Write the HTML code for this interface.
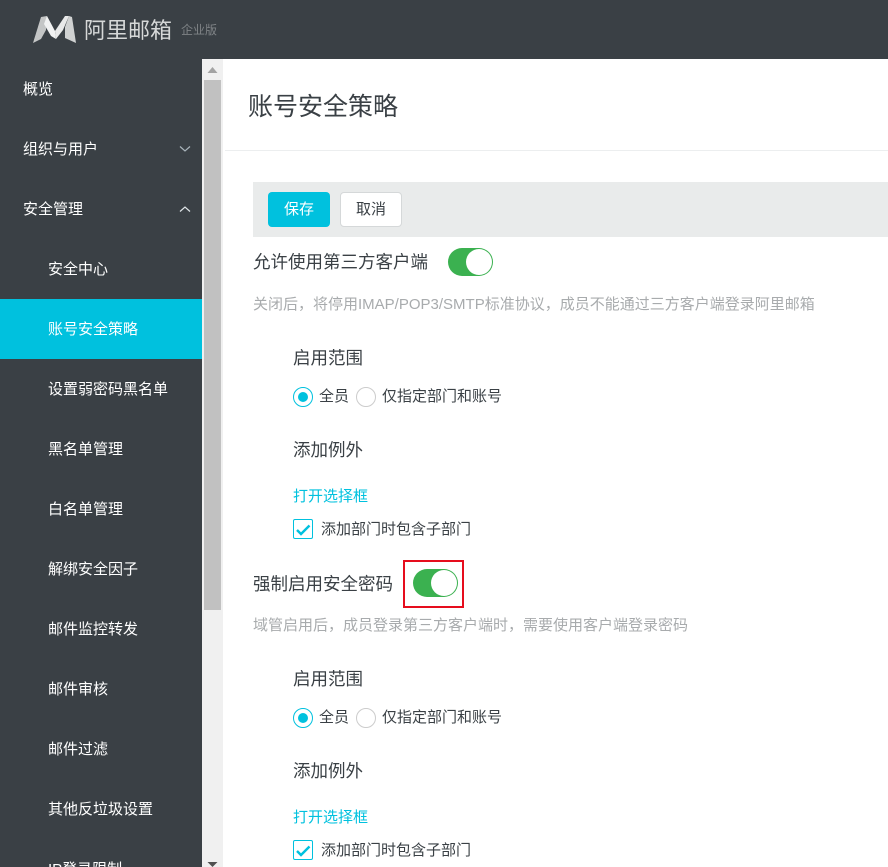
<!DOCTYPE html>
<html lang="zh-CN">
<head>
<meta charset="utf-8">
<title>账号安全策略</title>
<style>
html,body{margin:0;padding:0;width:888px;height:867px;overflow:hidden;background:#fff}
body{font-family:"Liberation Sans","Noto Sans CJK SC",sans-serif;color:#3a4045;position:relative}
.a{position:absolute;white-space:nowrap}
#hd{left:0;top:0;width:888px;height:59px;background:#3a4045}
#sb{left:0;top:59px;width:202px;height:808px;background:#3a4045;overflow:hidden}
.it{position:absolute;left:0;width:202px;height:60px;line-height:61px;color:#fff;font-size:15px;box-sizing:border-box;padding-left:23px}
.sub{padding-left:48px}
.on{background:#00c1de}
#track{left:202px;top:59px;width:21px;height:808px;background:#f0f0f0}
#thumb{left:204px;top:80px;width:17px;height:530px;background:#c1c1c1}
.t16{font-size:17.5px;line-height:24px}
.t14{font-size:15px;line-height:20px}
.t13{font-size:15px;line-height:20px}
.sw{width:45px;height:28px;border-radius:14px;background:#3bb150}
.sw:after{content:"";position:absolute;right:1px;top:1px;width:26px;height:26px;border-radius:50%;background:#fff}
.ra{width:18px;height:18px;border:1px solid #ccc;border-radius:50%;background:#fff}
.ra.c{border-color:#00c1de}
.ra.c:after{content:"";position:absolute;left:4px;top:4px;width:10px;height:10px;border-radius:50%;background:#00c1de}
.cb{width:18px;height:18px;border:1px solid #00c1de;border-radius:2px;background:#fff}
.lnk{color:#00c1de}
.gr{color:#a8abad}
</style>
</head>
<body>
<div class="a" id="hd"></div>
<svg class="a" style="left:32px;top:15px" width="46" height="30" viewBox="0 0 46 30">
<polygon points="1,28 9,2 15,1 14,15 9,24" fill="#c4c6c6"/>
<polygon points="15,1 23,16 24,24 19,21 12,9" fill="#f1f2f2"/>
<polygon points="24,24 23,16 33,1 37,1 31,15" fill="#e8e9e9"/>
<polygon points="37,1 40,2 44,28 33,23 33,12" fill="#d0d2d2"/>
</svg>
<div class="a" style="left:84px;top:14px;font-size:22px;line-height:34px;color:#d6d8d8;font-weight:400">阿里邮箱</div>
<div class="a" style="left:181px;top:21px;font-size:12px;line-height:18px;color:#7f8386">企业版</div>

<div class="a" id="sb">
<div class="it" style="top:0">概览</div>
<div class="it" style="top:60px">组织与用户</div>
<div class="it" style="top:120px">安全管理</div>
<div class="it sub" style="top:180px">安全中心</div>
<div class="it sub on" style="top:240px">账号安全策略</div>
<div class="it sub" style="top:300px">设置弱密码黑名单</div>
<div class="it sub" style="top:360px">黑名单管理</div>
<div class="it sub" style="top:420px">白名单管理</div>
<div class="it sub" style="top:480px">解绑安全因子</div>
<div class="it sub" style="top:540px">邮件监控转发</div>
<div class="it sub" style="top:600px">邮件审核</div>
<div class="it sub" style="top:660px">邮件过滤</div>
<div class="it sub" style="top:720px">其他反垃圾设置</div>
<div class="it sub" style="top:780px">IP登录限制</div>
<svg style="position:absolute;left:179px;top:86px" width="12" height="8" viewBox="0 0 12 8"><path d="M1 1.5 L6 6 L11 1.5" fill="none" stroke="#a9b4bb" stroke-width="1.2"/></svg>
<svg style="position:absolute;left:179px;top:146px" width="12" height="8" viewBox="0 0 12 8"><path d="M1 6.5 L6 2 L11 6.5" fill="none" stroke="#dfe5e8" stroke-width="1.2"/></svg>
</div>

<div class="a" id="track"></div>
<div class="a" id="thumb"></div>
<svg class="a" style="left:207px;top:67px" width="11" height="6"><polygon points="5.5,0 10.5,6 0.5,6" fill="#a3a3a3"/></svg>
<svg class="a" style="left:207px;top:862px" width="11" height="5"><polygon points="0.5,0 10.5,0 5.5,5" fill="#505050"/></svg>

<div class="a" style="left:248px;top:89px;font-size:25px;line-height:36px;color:#3a4045">账号安全策略</div>
<div class="a" style="left:225px;top:150px;width:663px;height:1px;background:#eceeef"></div>

<div class="a" style="left:253px;top:182px;width:635px;height:55px;background:#e9ebeb"></div>
<div class="a t14" style="left:268px;top:192px;width:62px;height:35px;line-height:35px;background:#00c1de;color:#fff;text-align:center;border-radius:4px">保存</div>
<div class="a t14" style="left:340px;top:192px;width:60px;height:33px;line-height:33px;background:#fff;border:1px solid #d5d8d9;text-align:center;border-radius:4px">取消</div>

<div class="a t16" style="left:253px;top:250px">允许使用第三方客户端</div>
<div class="a sw" style="left:448px;top:248px"></div>
<div class="a t13 gr" style="left:253px;top:295px">关闭后，将停用IMAP/POP3/SMTP标准协议，成员不能通过三方客户端登录阿里邮箱</div>
<div class="a t16" style="left:293px;top:346px">启用范围</div>
<div class="a ra c" style="left:293px;top:387px"></div>
<div class="a t14" style="left:319px;top:387px">全员</div>
<div class="a ra" style="left:356px;top:387px"></div>
<div class="a t14" style="left:382px;top:387px">仅指定部门和账号</div>
<div class="a t16" style="left:293px;top:438px">添加例外</div>
<div class="a t14 lnk" style="left:293px;top:487px">打开选择框</div>
<div class="a cb" style="left:293px;top:519px"></div>
<svg class="a" style="left:293px;top:519px" width="20" height="20"><path d="M4 11 L8 15 L16.5 6.5" fill="none" stroke="#00c1de" stroke-width="2.4"/></svg>
<div class="a t14" style="left:321px;top:520px">添加部门时包含子部门</div>

<div class="a t16" style="left:253px;top:572px">强制启用安全密码</div>
<div class="a" style="left:403px;top:560px;width:57px;height:44px;border:2px solid #e60d1d"></div>
<div class="a sw" style="left:413px;top:569px"></div>
<div class="a t13 gr" style="left:253px;top:616px">域管启用后，成员登录第三方客户端时，需要使用客户端登录密码</div>
<div class="a t16" style="left:293px;top:667px">启用范围</div>
<div class="a ra c" style="left:293px;top:708px"></div>
<div class="a t14" style="left:319px;top:708px">全员</div>
<div class="a ra" style="left:356px;top:708px"></div>
<div class="a t14" style="left:382px;top:708px">仅指定部门和账号</div>
<div class="a t16" style="left:293px;top:759px">添加例外</div>
<div class="a t14 lnk" style="left:293px;top:808px">打开选择框</div>
<div class="a cb" style="left:293px;top:840px"></div>
<svg class="a" style="left:293px;top:840px" width="20" height="20"><path d="M4 11 L8 15 L16.5 6.5" fill="none" stroke="#00c1de" stroke-width="2.4"/></svg>
<div class="a t14" style="left:321px;top:841px">添加部门时包含子部门</div>
</body>
</html>
